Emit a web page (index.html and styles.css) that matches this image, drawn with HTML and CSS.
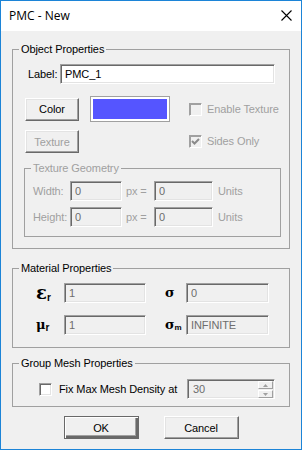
FILE: index.html
```html
<!DOCTYPE html>
<html lang="en">
<head>
    <meta charset="UTF-8">
    <title>PMC - New</title>
    <link rel="stylesheet" href="styles.css">
</head>
<body>
    <div class="window">
        <div class="titlebar">
            <span class="title">PMC - New</span>
            <svg class="close" viewBox="0 0 11 11" width="11" height="11">
                <path d="M0.5 0.5 L10.5 10.5 M10.5 0.5 L0.5 10.5" stroke="#000" stroke-width="1.1" fill="none"/>
            </svg>
        </div>
        <div class="client">
            <fieldset class="group">
                <legend>Object Properties</legend>
                <div class="label-row">
                    <span class="label-text">Label:</span>
                    <input class="edit label-edit" type="text" value="PMC_1">
                </div>
                <div class="color-grid">
                    <button class="btn">Color</button>
                    <div class="swatch"><div class="swatch-fill"></div></div>
                    <div class="check-row disabled"><span class="check off"></span>Enable Texture</div>
                    <button class="btn disabled">Texture</button>
                    <div></div>
                    <div class="check-row disabled">
                        <span class="check off">
                            <svg viewBox="0 0 11 11" width="11" height="11"><path d="M2 5 L4.5 7.5 L9 3" stroke="#8a8a8a" stroke-width="2" fill="none"/></svg>
                        </span>Sides Only
                    </div>
                </div>
                <fieldset class="group geo disabled">
                    <legend>Texture Geometry</legend>
                    <div class="geo-grid">
                        <span>Width:</span>
                        <input class="edit off" type="text" value="0" disabled>
                        <span class="px">px =</span>
                        <input class="edit off" type="text" value="0" disabled>
                        <span class="units">Units</span>
                        <span>Height:</span>
                        <input class="edit off" type="text" value="0" disabled>
                        <span class="px">px =</span>
                        <input class="edit off" type="text" value="0" disabled>
                        <span class="units">Units</span>
                    </div>
                </fieldset>
            </fieldset>

            <fieldset class="group material">
                <legend>Material Properties</legend>
                <div class="mat-grid">
                    <span class="sym"><span class="eps">ε</span><span class="sub">r</span></span>
                    <input class="edit off" type="text" value="1" disabled>
                    <span class="sym right"><span class="greek">σ</span></span>
                    <input class="edit off" type="text" value="0" disabled>
                    <span class="sym"><span class="greek">μ</span><span class="sub">r</span></span>
                    <input class="edit off" type="text" value="1" disabled>
                    <span class="sym right"><span class="greek">σ</span><span class="sub small">m</span></span>
                    <input class="edit off" type="text" value="INFINITE" disabled>
                </div>
            </fieldset>

            <fieldset class="group mesh">
                <legend>Group Mesh Properties</legend>
                <div class="mesh-row">
                    <span class="check"></span>
                    <span class="mesh-text">Fix Max Mesh Density at</span>
                    <div class="spin">
                        <span class="spin-value">30</span>
                        <div class="spin-btns">
                            <div class="spin-btn"><svg viewBox="0 0 5 3" width="5" height="3"><path d="M2.5 0 L5 3 L0 3 Z" fill="#a0a0a0"/></svg></div>
                            <div class="spin-btn"><svg viewBox="0 0 5 3" width="5" height="3"><path d="M0 0 L5 0 L2.5 3 Z" fill="#a0a0a0"/></svg></div>
                        </div>
                    </div>
                </div>
            </fieldset>

            <div class="actions">
                <button class="btn wide default">OK</button>
                <button class="btn wide">Cancel</button>
            </div>
        </div>
    </div>
</body>
</html>
```

FILE: styles.css
```css
* {
    margin: 0;
    padding: 0;
    box-sizing: border-box;
}

body {
    font-family: "Liberation Sans", Arial, sans-serif;
    font-size: 11px;
    line-height: 13px;
    letter-spacing: -0.1px;
    color: #000;
    background: #fff;
}

.window {
    width: 302px;
    height: 450px;
    border: 1px solid #1c84d7;
    background: #f0f0f0;
    overflow: hidden;
}

/* title bar */

.titlebar {
    height: 30px;
    background: #fff;
    display: flex;
    align-items: center;
    justify-content: space-between;
    padding: 0 9px 0 8px;
}

.title {
    font-family: "Open Sans", "Noto Sans", sans-serif;
    font-size: 12px;
    letter-spacing: 0;
    line-height: 30px;
}

.close {
    display: block;
    margin-top: -1px;
}

.client {
    padding: 12px 11px 0;
}

/* group boxes */

fieldset.group {
    border: 1px solid #a0a0a0;
    min-width: 0;
}

fieldset.group legend {
    margin-left: 6px;
    padding: 0 2px;
}

.disabled,
.disabled legend {
    color: #a0a0a0;
}

/* controls */

.edit {
    display: block;
    height: 20px;
    font-family: inherit;
    font-size: 11px;
    letter-spacing: -0.1px;
    padding: 0 4px;
    color: #000;
    background: #fff;
    border: 1px solid;
    border-color: #a0a0a0 #fff #fff #a0a0a0;
    box-shadow: inset 1px 1px 0 #696969, inset -1px -1px 0 #e3e3e3;
    outline: none;
}

.edit.off {
    color: #6d6d6d;
    background: #f0f0f0;
    -webkit-text-fill-color: #6d6d6d;
    opacity: 1;
}

.btn {
    display: block;
    height: 23px;
    font-family: inherit;
    font-size: 11px;
    letter-spacing: -0.1px;
    color: #000;
    background: #f0f0f0;
    border: 1px solid;
    border-color: #fff #696969 #696969 #fff;
    box-shadow: inset -1px -1px 0 #a0a0a0, inset 1px 1px 0 #e3e3e3;
}

.btn.disabled {
    color: #a0a0a0;
}

.btn.default {
    border-color: #696969;
    box-shadow: inset 1px 1px 0 #fff, inset -2px -2px 0 #696969, inset -3px -3px 0 #a0a0a0;
}

.check {
    display: flex;
    align-items: center;
    justify-content: center;
    width: 13px;
    height: 13px;
    flex: none;
    background: #fff;
    border: 1px solid;
    border-color: #a0a0a0 #fff #fff #a0a0a0;
    box-shadow: inset 1px 1px 0 #696969, inset -1px -1px 0 #e3e3e3;
}

.check.off {
    background: #f0f0f0;
    box-shadow: inset 1px 1px 0 #a0a0a0;
}

.check svg {
    display: block;
}

.check-row {
    display: flex;
    align-items: center;
    gap: 5px;
}

/* object properties */

.label-row {
    display: flex;
    align-items: center;
    margin-top: 8px;
    padding-left: 15px;
}

.label-text {
    width: 32px;
}

.label-edit {
    width: 215px;
}

.color-grid {
    display: grid;
    grid-template-columns: 65px 99px auto;
    grid-template-rows: 26px 23px;
    row-gap: 8px;
    align-items: center;
    margin-top: 12px;
    padding-left: 12px;
}

.color-grid .btn {
    width: 54px;
}

.swatch {
    width: 80px;
    height: 26px;
    padding: 2px;
    background: #fff;
    border: 1px solid #a0a0a0;
}

.swatch-fill {
    height: 100%;
    background: #5555ff;
}

.geo {
    margin: 9px 8px 11px 11px;
}

.geo-grid {
    display: grid;
    grid-template-columns: 37px 52px 32px 59px auto;
    grid-auto-rows: 20px;
    row-gap: 6px;
    align-items: center;
    padding: 6px 0 9px 8px;
}

.geo-grid .px {
    padding-left: 4px;
}

.geo-grid .units {
    padding-left: 5px;
}

/* material properties */

.material {
    margin-top: 13px;
}

.mat-grid {
    display: grid;
    grid-template-columns: 28px 82px 40px 83px;
    grid-auto-rows: 20px;
    row-gap: 12px;
    align-items: center;
    padding: 8px 0 12px 23px;
}

.sym {
    display: flex;
    align-items: baseline;
    letter-spacing: 0;
}

.sym.right {
    padding-left: 19px;
}

.eps {
    font-family: "DejaVu Serif", serif;
    font-weight: bold;
    font-size: 18px;
    line-height: 20px;
}

.greek {
    font-family: "DejaVu Serif", serif;
    font-weight: bold;
    font-size: 13px;
    line-height: 20px;
}

.sub {
    font-family: "Liberation Sans", Arial, sans-serif;
    font-weight: bold;
    font-size: 10px;
    position: relative;
    top: 2px;
}

.sub.small {
    font-size: 8px;
    top: 1px;
}

/* mesh */

.mesh {
    margin-top: 9px;
}

.mesh-row {
    display: flex;
    align-items: center;
    height: 20px;
    margin: 9px 14px 7px 26px;
}

.mesh-text {
    margin-left: 7px;
}

.spin {
    display: flex;
    align-items: center;
    justify-content: space-between;
    width: 88px;
    height: 20px;
    margin-left: auto;
    padding: 0 1px 0 5px;
    color: #6d6d6d;
    background: #f0f0f0;
    border: 1px solid;
    border-color: #a0a0a0 #fff #fff #a0a0a0;
    box-shadow: inset 1px 1px 0 #696969, inset -1px -1px 0 #e3e3e3;
}

.spin-btns {
    display: flex;
    flex-direction: column;
    gap: 1px;
    margin-top: 1px;
}

.spin-btn {
    display: flex;
    align-items: center;
    justify-content: center;
    width: 15px;
    height: 8px;
    border: 1px solid;
    border-color: #fff #a0a0a0 #a0a0a0 #fff;
}

.spin-btn svg {
    display: block;
}

/* buttons */

.actions {
    display: flex;
    justify-content: center;
    gap: 25px;
    margin-top: 9px;
}

.btn.wide {
    width: 75px;
}
```
